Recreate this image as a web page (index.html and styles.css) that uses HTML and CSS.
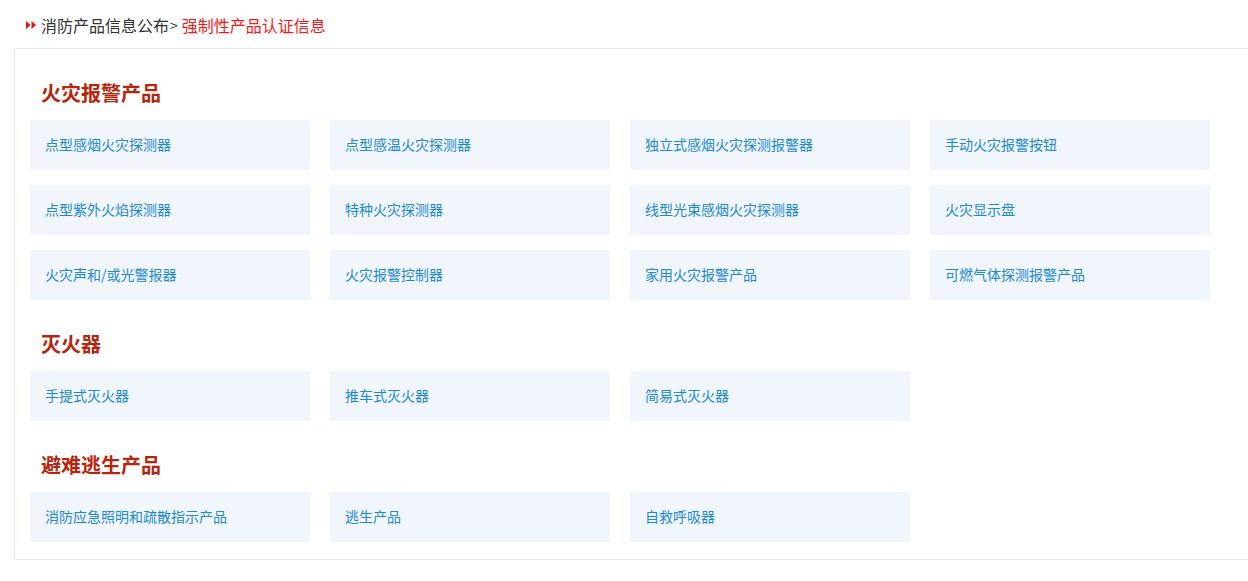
FILE: index.html
```html
<!DOCTYPE html>
<html lang="zh-CN">
<head>
<meta charset="utf-8">
<title>强制性产品认证信息</title>
<link rel="stylesheet" href="styles.css">
</head>
<body>
<div class="crumb">
  <svg class="crumb-icon" width="12" height="10" viewBox="0 0 12 10"><polygon points="1,1 5.5,5 1,9" fill="#e8140c"/><polygon points="6.5,1 11,5 6.5,9" fill="#e8140c"/></svg>
  <span class="crumb-parent">消防产品信息公布</span><span class="crumb-sep">&gt;</span>
  <span class="crumb-current">强制性产品认证信息</span>
</div>
<div class="panel">
  <section class="group">
    <h3 class="group-title">火灾报警产品</h3>
    <div class="grid">
      <a class="item">点型感烟火灾探测器</a>
      <a class="item">点型感温火灾探测器</a>
      <a class="item">独立式感烟火灾探测报警器</a>
      <a class="item">手动火灾报警按钮</a>
      <a class="item">点型紫外火焰探测器</a>
      <a class="item">特种火灾探测器</a>
      <a class="item">线型光束感烟火灾探测器</a>
      <a class="item">火灾显示盘</a>
      <a class="item">火灾声和/或光警报器</a>
      <a class="item">火灾报警控制器</a>
      <a class="item">家用火灾报警产品</a>
      <a class="item">可燃气体探测报警产品</a>
    </div>
  </section>
  <section class="group">
    <h3 class="group-title">灭火器</h3>
    <div class="grid">
      <a class="item">手提式灭火器</a>
      <a class="item">推车式灭火器</a>
      <a class="item">简易式灭火器</a>
    </div>
  </section>
  <section class="group">
    <h3 class="group-title">避难逃生产品</h3>
    <div class="grid">
      <a class="item">消防应急照明和疏散指示产品</a>
      <a class="item">逃生产品</a>
      <a class="item">自救呼吸器</a>
    </div>
  </section>
</div>
</body>
</html>
```
FILE: styles.css
```css
html, body {
  margin: 0;
  padding: 0;
  background: #fff;
}
body {
  font-family: "Noto Sans CJK SC", "Liberation Sans", sans-serif;
  overflow-x: hidden;
}
.crumb {
  box-sizing: border-box;
  height: 48px;
  padding: 14px 0 0 25px;
  line-height: 22px;
  font-size: 16px;
  display: flex;
  align-items: flex-start;
}
.crumb-icon {
  margin: 6px 4px 0 0;
  flex: none;
}
.crumb-parent {
  color: #333;
}
.crumb-sep {
  color: #333;
  font-size: 14px;
  margin: 0 4px 0 1px;
}
.crumb-current {
  color: #f21818;
}
.panel {
  margin-left: 14px;
  border: 1px solid #ebebeb;
  border-right: 0;
  padding: 0 0 17px 15px;
}
.group-title {
  margin: 30px 0 13px 11px;
  font-size: 20px;
  line-height: 28px;
  font-weight: bold;
  color: #b6250d;
}
.grid {
  display: grid;
  grid-template-columns: repeat(4, 280px);
  column-gap: 20px;
  row-gap: 15px;
}
.item {
  display: block;
  height: 50px;
  line-height: 48px;
  padding-left: 15px;
  background: #f1f5fc;
  color: #1b8ad3;
  font-size: 14px;
  text-decoration: none;
  white-space: nowrap;
}
```
